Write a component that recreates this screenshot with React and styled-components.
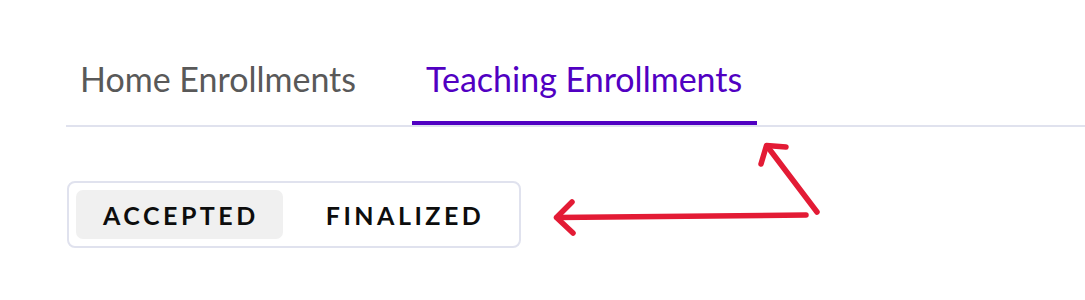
import React, { useState } from 'react'
import styled, { createGlobalStyle } from 'styled-components'

const Colors = {
  PURPLE: '#5100c2',
  GREY_TEXT: '#595959',
  DIVIDER: '#e0e2ee',
  RED: '#e31b35',
}

const GlobalStyle = createGlobalStyle`
  body {
    margin: 0;
    background: #ffffff;
    font-family: Lato, "Open Sans", Arial, sans-serif;
  }
`

function Annotations () {
  return (
    <Overlay viewBox="0 0 1085 300" aria-hidden="true">
      <g
        fill="none"
        stroke={Colors.RED}
        strokeWidth="5.5"
        strokeLinecap="round"
        strokeLinejoin="round"
      >
        <path d="M806 215 L557 217.5"/>
        <path d="M572 202 L556.5 217.5 L573 233"/>
        <path d="M817 212 L767 146"/>
        <path d="M761 164 L766.5 145.5 L786 147"/>
      </g>
    </Overlay>
  )
}

function App () {
  const [tab, setTab] = useState('teaching')
  const [status, setStatus] = useState('accepted')

  return (
    <Page>
      <GlobalStyle/>
      <TabBar>
        <Tab active={tab === 'home'} onClick={() => setTab('home')}>
          Home Enrollments
        </Tab>
        <Tab active={tab === 'teaching'} onClick={() => setTab('teaching')}>
          Teaching Enrollments
        </Tab>
      </TabBar>
      <Segmented>
        <Segment
          active={status === 'accepted'}
          onClick={() => setStatus('accepted')}
        >
          Accepted
        </Segment>
        <Segment
          active={status === 'finalized'}
          onClick={() => setStatus('finalized')}
        >
          Finalized
        </Segment>
      </Segmented>
      <Annotations/>
    </Page>
  )
}

const Page = styled.div`
  position: relative;
  width: 1085px;
  height: 300px;
  box-sizing: border-box;
  padding: 41px 0 0 66px;
  overflow: hidden;
`

const TabBar = styled.div`
  display: flex;
  gap: 41px;
  border-bottom: 2px solid ${Colors.DIVIDER};
`

const Tab = styled.button.attrs(() => ({
  type: 'button',
}))`
  appearance: none;
  background: none;
  border: none;
  border-bottom: 4px solid ${({ active }) => (active ? Colors.PURPLE : 'transparent')};
  margin: 0;
  padding: 18px 15px 22px 14px;
  font-family: Lato, "Open Sans", Arial, sans-serif;
  font-size: 34px;
  line-height: 40px;
  font-weight: 400;
  color: ${({ active }) => (active ? Colors.PURPLE : Colors.GREY_TEXT)};
  cursor: pointer;
`

const Segmented = styled.div`
  display: inline-flex;
  gap: 16px;
  margin: 54px 0 0 1px;
  padding: 7px 11px 7px 7px;
  border: 2px solid ${Colors.DIVIDER};
  border-radius: 8px;
`

const Segment = styled.button.attrs(() => ({
  type: 'button',
}))`
  appearance: none;
  border: none;
  margin: 0;
  height: 49px;
  padding: 0 24px 0 27px;
  border-radius: 7px;
  background: ${({ active }) => (active ? '#f0f0f0' : 'transparent')};
  font-family: Lato, "Open Sans", Arial, sans-serif;
  font-size: 25px;
  font-weight: 700;
  letter-spacing: 3.5px;
  text-transform: uppercase;
  color: #0d0d0d;
  cursor: pointer;
`

const Overlay = styled.svg`
  position: absolute;
  top: 0;
  left: 0;
  width: 1085px;
  height: 300px;
  pointer-events: none;
`

export default App
